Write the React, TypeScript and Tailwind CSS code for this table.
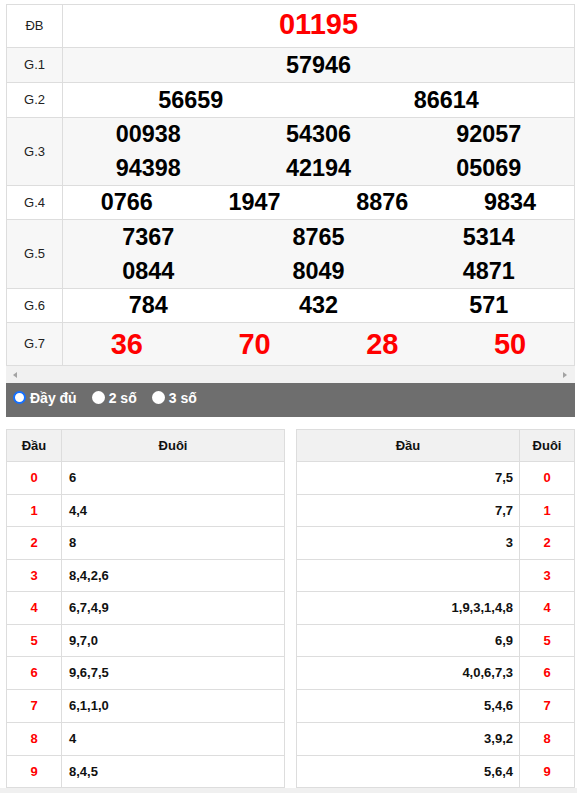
import React from "react";

const font = { fontFamily: '"Liberation Sans", Arial, sans-serif' };

type Row = {
  label: string;
  h: string;
  cols: string;
  lineH: string;
  nums: string[];
  red?: boolean;
  big?: boolean;
  stripe?: boolean;
  pad?: string;
};

const rows: Row[] = [
  { label: "ĐB", h: "h-[43px]", cols: "grid-cols-1", lineH: "leading-[38px]", nums: ["01195"], red: true, big: true, pad: "pb-[4px]" },
  { label: "G.1", h: "h-[35px]", cols: "grid-cols-1", lineH: "leading-[34px]", nums: ["57946"], stripe: true },
  { label: "G.2", h: "h-[35px]", cols: "grid-cols-2", lineH: "leading-[34px]", nums: ["56659", "86614"] },
  { label: "G.3", h: "h-[68px]", cols: "grid-cols-3", lineH: "leading-[33.5px]", nums: ["00938", "54306", "92057", "94398", "42194", "05069"], stripe: true },
  { label: "G.4", h: "h-[34px]", cols: "grid-cols-4", lineH: "leading-[33px]", nums: ["0766", "1947", "8876", "9834"] },
  { label: "G.5", h: "h-[69px]", cols: "grid-cols-3", lineH: "leading-[34px]", nums: ["7367", "8765", "5314", "0844", "8049", "4871"], stripe: true },
  { label: "G.6", h: "h-[34px]", cols: "grid-cols-3", lineH: "leading-[33px]", nums: ["784", "432", "571"] },
  { label: "G.7", h: "h-[42px]", cols: "grid-cols-4", lineH: "leading-[42px]", nums: ["36", "70", "28", "50"], red: true, big: true, stripe: true },
];

const dau = ["6", "4,4", "8", "8,4,2,6", "6,7,4,9", "9,7,0", "9,6,7,5", "6,1,1,0", "4", "8,4,5"];
const duoi = ["7,5", "7,7", "3", "", "1,9,3,1,4,8", "6,9", "4,0,6,7,3", "5,4,6", "3,9,2", "5,6,4"];
const rowH = ["h-[33px]", "h-[32px]", "h-[33px]", "h-[32px]", "h-[33px]", "h-[32px]", "h-[33px]", "h-[33px]", "h-[33px]", "h-[32px]"];

function Radio({ checked }: { checked?: boolean }) {
  return checked ? (
    <span className="box-border inline-block h-[13px] w-[13px] shrink-0 rounded-full border-2 border-[#1570ff] bg-white" />
  ) : (
    <span className="inline-block h-[13px] w-[13px] shrink-0 rounded-full bg-white" />
  );
}

export default function App() {
  return (
    <div className="min-h-[793px] bg-white" style={font}>
      <div className="ml-[6px] w-[569px] pt-[4px]">
        {/* results table */}
        <div className="border border-[#dddddd]">
          {rows.map((r, i) => (
            <div
              key={r.label}
              className={`flex ${r.h} ${i < rows.length - 1 ? "border-b border-[#dddddd]" : ""} ${r.stripe ? "bg-[#f7f7f7]" : "bg-white"}`}
            >
              <div className="flex w-[56px] shrink-0 items-center justify-center border-r border-[#dddddd] text-[13px] text-[#222]">
                {r.label}
              </div>
              <div className={`grid flex-1 content-center ${r.cols} ${r.pad ?? ""}`}>
                {r.nums.map((n, j) => (
                  <div
                    key={j}
                    className={`text-center font-bold ${r.lineH} ${r.big ? "text-[29px]" : "text-[23.4px]"} ${r.red ? "text-[#ff0000]" : "text-black"}`}
                  >
                    {n}
                  </div>
                ))}
              </div>
            </div>
          ))}
        </div>
        {/* horizontal scrollbar */}
        <div className="flex h-[17px] items-center justify-between bg-[#f1f1f1] px-[6px]">
          <svg width="4" height="6" viewBox="0 0 4 6" className="ml-[1px]">
            <path d="M4 0 L0 3 L4 6 Z" fill="#a3a3a3" />
          </svg>
          <svg width="4" height="6" viewBox="0 0 4 6" className="mr-[2px]">
            <path d="M0 0 L4 3 L0 6 Z" fill="#a3a3a3" />
          </svg>
        </div>
        {/* radio bar */}
        <div className="flex h-[34px] items-start bg-[#6e6e6e] pl-[7px] pt-[8px] text-[14px] font-bold leading-[16px] text-white">
          <label className="flex items-start">
            <Radio checked />
            <span className="ml-[4px] -mt-[3px] leading-[20px]">Đầy đủ</span>
          </label>
          <label className="ml-[15px] flex items-start">
            <Radio />
            <span className="ml-[4px] -mt-[3px] leading-[20px]">2 số</span>
          </label>
          <label className="ml-[15px] flex items-start">
            <Radio />
            <span className="ml-[4px] -mt-[3px] leading-[20px]">3 số</span>
          </label>
        </div>
        {/* loto tables */}
        <div className="mt-[12px] flex gap-[11px]">
          <div className="w-[279px] border-x border-t border-[#dddddd] text-[13px] font-bold">
            <div className="flex h-[32px] border-b border-[#dddddd] bg-[#f1f1f1] text-[#111]">
              <div className="flex w-[55px] items-center justify-center border-r border-[#dddddd]">Đầu</div>
              <div className="flex flex-1 items-center justify-center">Đuôi</div>
            </div>
            {dau.map((v, i) => (
              <div key={i} className={`flex ${rowH[i]} border-b border-[#dddddd]`}>
                <div className="flex w-[55px] items-center justify-center border-r border-[#dddddd] text-[#ff0000]">{i}</div>
                <div className="flex flex-1 items-center pl-[7px] text-[#111]">{v}</div>
              </div>
            ))}
          </div>
          <div className="w-[279px] border-x border-t border-[#dddddd] text-[13px] font-bold">
            <div className="flex h-[32px] border-b border-[#dddddd] bg-[#f1f1f1] text-[#111]">
              <div className="flex flex-1 items-center justify-center">Đầu</div>
              <div className="flex w-[55px] items-center justify-center border-l border-[#dddddd]">Đuôi</div>
            </div>
            {duoi.map((v, i) => (
              <div key={i} className={`flex ${rowH[i]} border-b border-[#dddddd]`}>
                <div className="flex flex-1 items-center justify-end pr-[6px] text-[#111]">{v}</div>
                <div className="flex w-[55px] items-center justify-center border-l border-[#dddddd] text-[#ff0000]">{i}</div>
              </div>
            ))}
          </div>
        </div>
      </div>
      <div className="h-[10px] w-full bg-[#f0f0f0]" />
    </div>
  );
}
